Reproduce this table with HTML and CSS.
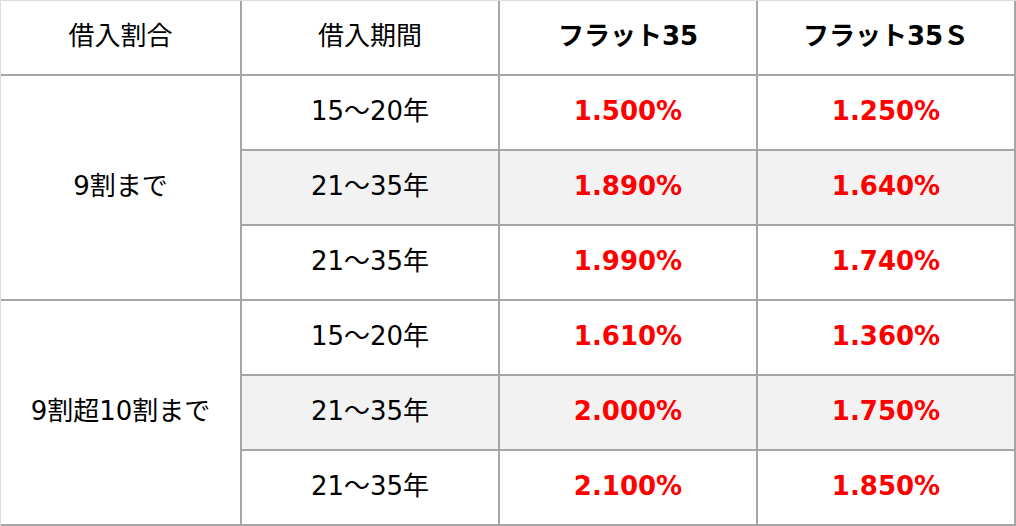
FILE: index.html
```html
<!DOCTYPE html>
<html lang="ja">
<head>
<meta charset="utf-8">
<link rel="stylesheet" href="styles.css">
</head>
<body>
<table class="rates">
  <colgroup>
    <col class="c1"><col class="c2"><col class="c3"><col class="c4">
  </colgroup>
  <thead>
    <tr>
      <th>借入割合</th>
      <th>借入期間</th>
      <th class="bold">フラット35</th>
      <th class="bold">フラット35Ｓ</th>
    </tr>
  </thead>
  <tbody>
    <tr>
      <td rowspan="3" class="ratio">9割まで</td>
      <td>15～20年</td>
      <td class="rate">1.500%</td>
      <td class="rate">1.250%</td>
    </tr>
    <tr class="alt">
      <td>21～35年</td>
      <td class="rate">1.890%</td>
      <td class="rate">1.640%</td>
    </tr>
    <tr>
      <td>21～35年</td>
      <td class="rate">1.990%</td>
      <td class="rate">1.740%</td>
    </tr>
    <tr>
      <td rowspan="3" class="ratio">9割超10割まで</td>
      <td>15～20年</td>
      <td class="rate">1.610%</td>
      <td class="rate">1.360%</td>
    </tr>
    <tr class="alt">
      <td>21～35年</td>
      <td class="rate">2.000%</td>
      <td class="rate">1.750%</td>
    </tr>
    <tr>
      <td>21～35年</td>
      <td class="rate">2.100%</td>
      <td class="rate">1.850%</td>
    </tr>
  </tbody>
</table>
</body>
</html>
```

FILE: styles.css
```css
html, body {
  margin: 0;
  padding: 0;
  background: #ffffff;
}

.rates {
  width: 1016px;
  table-layout: fixed;
  border-collapse: separate;
  border-spacing: 0;
  border-top: 1px solid #dcdcdc;
  border-left: 1px solid #dcdcdc;
  font-family: "DejaVu Sans", "Noto Sans CJK JP", sans-serif;
  font-size: 26px;
  color: #000000;
}

.c1 { width: 241px; }
.c2 { width: 258px; }
.c3 { width: 258px; }
.c4 { width: 258px; }

.rates th,
.rates td {
  box-sizing: border-box;
  height: 75px;
  padding: 0 0 4px 0;
  border-right: 2px solid #a6a6a6;
  border-bottom: 2px solid #a6a6a6;
  text-align: center;
  vertical-align: middle;
  font-weight: normal;
  line-height: 1;
  background: #ffffff;
}

.rates th.bold {
  font-weight: bold;
}

.rates tr.alt td {
  background: #f2f2f2;
}

.rates td.rate {
  color: #ff0000;
  font-weight: bold;
}
```
